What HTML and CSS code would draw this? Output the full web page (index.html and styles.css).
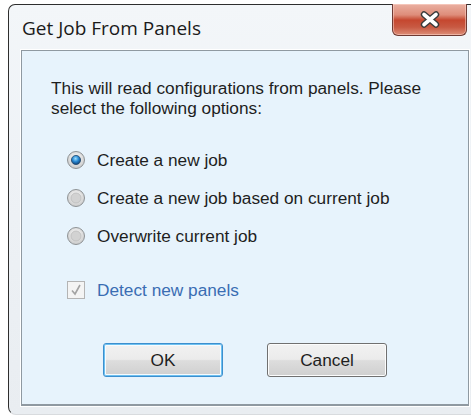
FILE: index.html
```html
<!DOCTYPE html>
<html>
<head>
<meta charset="utf-8">
<title>Get Job From Panels</title>
<link rel="stylesheet" href="styles.css">
</head>
<body>
<div class="window">
  <div class="titlebar">
    <span class="title">Get Job From Panels</span>
    <button class="close" aria-label="Close">
      <svg width="24" height="17" viewBox="0 0 24 17">
        <path d="M6 3.5 L18 13.5 M18 3.5 L6 13.5" stroke="#3a3a3a" stroke-width="6.4" stroke-linecap="round"/>
        <path d="M6 3.5 L18 13.5 M18 3.5 L6 13.5" stroke="#ffffff" stroke-width="3.6" stroke-linecap="round"/>
      </svg>
    </button>
  </div>
  <div class="client">
    <p class="intro">This will read configurations from panels. Please<br>select the following options:</p>
    <div class="options">
      <label class="option">
        <svg class="radio" width="20" height="20" viewBox="0 0 20 20">
          <defs>
            <radialGradient id="rface" cx="50%" cy="40%" r="60%">
              <stop offset="0" stop-color="#ffffff"/>
              <stop offset="1" stop-color="#c9c9c9"/>
            </radialGradient>
            <radialGradient id="rdot" cx="45%" cy="35%" r="65%">
              <stop offset="0" stop-color="#9fe0ff"/>
              <stop offset="0.5" stop-color="#2a8ad4"/>
              <stop offset="1" stop-color="#0f3f73"/>
            </radialGradient>
          </defs>
          <circle cx="10" cy="10" r="8.5" fill="url(#rface)" stroke="#8f9396"/>
          <circle cx="10" cy="10" r="4.6" fill="url(#rdot)" stroke="#25496c" stroke-width="0.8"/>
        </svg>
        <span>Create a new job</span>
      </label>
      <label class="option">
        <svg class="radio" width="20" height="20" viewBox="0 0 20 20">
          <circle cx="10" cy="10" r="8.5" fill="url(#rface)" stroke="#8f9396"/>
          <circle cx="10" cy="10" r="5" fill="#d2d2d2" stroke="#bdbdbd" stroke-width="0.8"/>
        </svg>
        <span>Create a new job based on current job</span>
      </label>
      <label class="option">
        <svg class="radio" width="20" height="20" viewBox="0 0 20 20">
          <circle cx="10" cy="10" r="8.5" fill="url(#rface)" stroke="#8f9396"/>
          <circle cx="10" cy="10" r="5" fill="#d2d2d2" stroke="#bdbdbd" stroke-width="0.8"/>
        </svg>
        <span>Overwrite current job</span>
      </label>
      <label class="option check-row">
        <svg class="check" width="20" height="20" viewBox="0 0 20 20">
          <rect x="1.5" y="1.5" width="17" height="17" fill="#f4f4f4" stroke="#b4b4b4"/>
          <path d="M6 10.5 L9 14 L14 5" fill="none" stroke="#a3a3a3" stroke-width="1.6"/>
        </svg>
        <span class="link">Detect new panels</span>
      </label>
    </div>
    <div class="buttons">
      <button class="btn default">OK</button>
      <button class="btn">Cancel</button>
    </div>
  </div>
</div>
</body>
</html>
```

FILE: styles.css
```css
html, body {
  margin: 0;
  padding: 0;
}

body {
  width: 471px;
  height: 417px;
  overflow: hidden;
  background: #ffffff;
  font-family: "Liberation Sans", Arial, sans-serif;
  font-size: 17.25px;
  color: #1e1e1e;
}

.window {
  margin: 4px 0 0 8px;
  width: 482px;
  height: 411px;
  box-sizing: border-box;
  border: 1px solid #2e2e2e;
  border-right-color: transparent;
  border-bottom-color: #d8dbde;
  border-radius: 7px 7px 0 8px;
  background: linear-gradient(to bottom, #f3f6f9 0%, #eef2f6 40%, #e9edf1 100%);
  padding: 0 11px 0 11px;
}

.titlebar {
  height: 45px;
  display: flex;
  align-items: flex-start;
  justify-content: space-between;
}

.title {
  font-family: "Open Sans", "Liberation Sans", sans-serif;
  font-size: 19px;
  color: #1a1a1a;
  margin: 10px 0 0 2px;
}

.close {
  width: 75px;
  height: 32px;
  margin: -1px 11px 0 0;
  padding: 0;
  border: 1px solid #6e3a33;
  border-top: none;
  border-radius: 0 0 6px 6px;
  background: linear-gradient(to bottom, #eab0a2 0%, #de8d7a 35%, #c5472f 52%, #c85a43 75%, #dd8e78 100%);
  box-shadow: inset 0 0 0 1px rgba(255, 220, 210, 0.5);
  display: flex;
  align-items: center;
  justify-content: center;
}

.close svg {
  display: block;
}

.client {
  height: 356px;
  box-sizing: border-box;
  border: 1px solid #8f99a1;
  border-bottom-width: 2px;
  box-shadow: 0 0 0 1px #ffffff;
  background: #e7f3fc;
  margin: 0 0 0 1px;
  width: 448px;
  padding: 27px 0 0 29px;
}

.intro {
  margin: 0;
  line-height: 20px;
}

.options {
  margin-top: 23px;
  padding-left: 15px;
  display: flex;
  flex-direction: column;
}

.option {
  height: 38px;
  display: flex;
  align-items: center;
  gap: 11px;
}

.check-row {
  margin-top: 16px;
}

.radio, .check {
  display: block;
  flex: none;
}

.link {
  color: #3a6db3;
}

.buttons {
  margin-top: 34px;
  margin-left: -29px;
  display: flex;
  justify-content: center;
  gap: 44px;
}

.btn {
  width: 120px;
  height: 34px;
  box-sizing: border-box;
  font-family: "Liberation Sans", Arial, sans-serif;
  font-size: 17.25px;
  color: #1e1e1e;
  border: 1px solid #707070;
  border-radius: 3px;
  background: linear-gradient(to bottom, #f2f2f2 0%, #ebebeb 48%, #dddddd 52%, #cfcfcf 100%);
  box-shadow: inset 0 0 0 1px #fcfcfc;
  padding: 0;
}

.btn.default {
  border-color: #3c8fcf;
  box-shadow: inset 0 0 0 1px #6ec1f0, inset 0 0 0 2px #f6fbff;
}
```
